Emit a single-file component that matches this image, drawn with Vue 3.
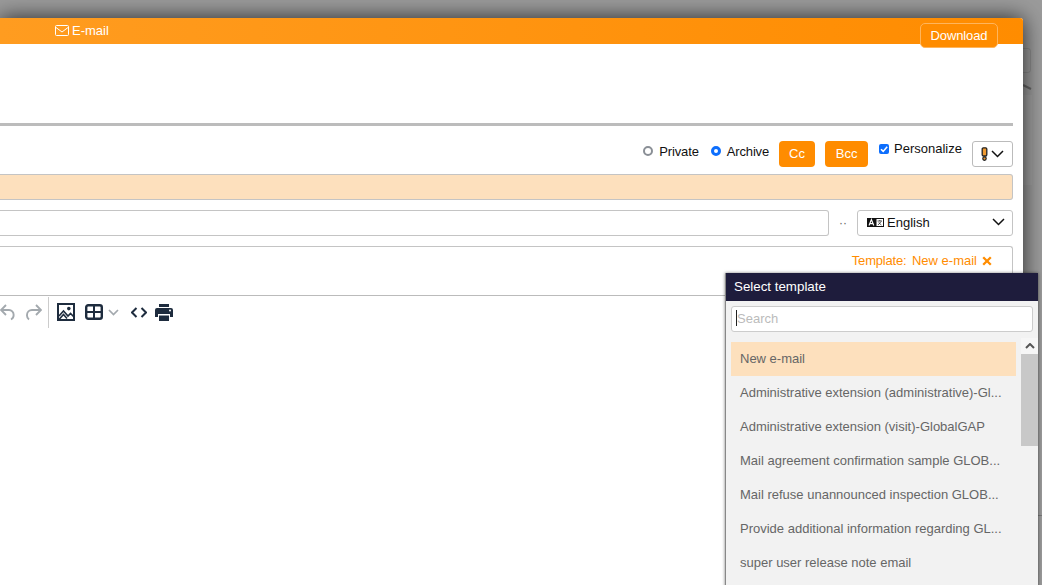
<script setup>
const items = [
  'New e-mail',
  'Administrative extension (administrative)-Gl...',
  'Administrative extension (visit)-GlobalGAP',
  'Mail agreement confirmation sample GLOB...',
  'Mail refuse unannounced inspection GLOB...',
  'Provide additional information regarding GL...',
  'super user release note email'
]
</script>

<template>
  <div class="page">
    <div class="bg-btn"></div>
    <svg class="bg-chev" viewBox="0 0 10 6" width="10" height="6"><path d="M1 1 L9 5" fill="none" stroke="#666" stroke-width="2"/></svg>
    <div class="bg-panel"></div>
    <div class="bg-line"></div>
    <div class="dialog">
      <header class="head">
        <span class="head-title">
          <svg class="env" viewBox="0 0 14 11" width="14" height="11"><rect x=".5" y=".5" width="13" height="10" rx="1" fill="none" stroke="#fff"/><path d="M1 2.5 L7 7 L13 2.5" fill="none" stroke="#fff"/></svg>
          E-mail
        </span>
        <button class="download">Download</button>
      </header>
      <div class="body">
        <div class="rule"></div>
        <div class="opts">
          <label class="radio"><span class="dot off"></span>Private</label>
          <label class="radio"><span class="dot on"></span>Archive</label>
          <button class="pill cc">Cc</button>
          <button class="pill bcc">Bcc</button>
          <label class="pers"><span class="check"><svg viewBox="0 0 10 10" width="10" height="10"><path d="M2 5.2 L4.2 7.4 L8.2 2.8" fill="none" stroke="#fff" stroke-width="1.6"/></svg></span><span class="pers-t">Personalize</span></label>
          <button class="prio">
            <svg viewBox="0 0 7 14" width="7" height="14"><rect x="1.2" y=".8" width="4.6" height="8.2" rx="1.2" fill="#f09a30" stroke="#222" stroke-width="1.3"/><circle cx="3.5" cy="11.6" r="1.7" fill="#f09a30" stroke="#222" stroke-width="1.2"/></svg>
            <svg viewBox="0 0 13 8" width="13" height="8"><path d="M1 1 L6.5 6.5 L12 1" fill="none" stroke="#111" stroke-width="1.5"/></svg>
          </button>
        </div>
        <div class="peach"></div>
        <div class="lang-row">
          <div class="field"></div>
          <span class="dots">··</span>
          <div class="lang">
            <svg viewBox="0 0 17 9" width="17" height="9"><rect width="17" height="9" fill="#111"/><path d="M2 7.5 L4.4 1.5 L6.8 7.5 M3 5.6 H5.8" fill="none" stroke="#fff" stroke-width="1.1"/><rect x="9.5" y="1" width="6.5" height="7" fill="#fff"/><path d="M10.5 3h4.5M12.8 2v1M11 7 14.2 3.5M11.6 4.5l2.8 2.5" stroke="#111" stroke-width=".7" fill="none"/></svg>
            <span>English</span>
            <svg class="lang-chev" viewBox="0 0 13 8" width="13" height="8"><path d="M1 1 L6.5 6.5 L12 1" fill="none" stroke="#111" stroke-width="1.5"/></svg>
          </div>
        </div>
        <div class="subject">
          <span class="tpl"><span class="tpl-k">Template:</span> <span class="tpl-v">New e-mail</span></span>
          <svg class="x" viewBox="0 0 10 10" width="10" height="10"><path d="M1.2 1.2 L8.8 8.8 M8.8 1.2 L1.2 8.8" stroke="#ff8c00" stroke-width="2.3"/></svg>
        </div>
        <div class="toolbar">
          <svg class="undo" viewBox="0 0 15 17" width="15" height="17"><path d="M6 1 L1 6 L6 11 M1 6 H9 A4.6 4.6 0 0 1 13.6 10.6 A5 5 0 0 1 11 15.5" fill="none" stroke="#a3a9ae" stroke-width="1.9"/></svg>
          <svg class="redo" viewBox="0 0 17 17" width="17" height="17"><path d="M11 1 L16 6 L11 11 M16 6 H7 A5 5 0 0 0 2 11 A5 5 0 0 0 4 15.5" fill="none" stroke="#a3a9ae" stroke-width="1.9"/></svg>
          <span class="sep"></span>
          <svg class="img" viewBox="0 0 18 18" width="18" height="18"><rect x="1" y="1" width="16" height="16" fill="none" stroke="#1e2c3e" stroke-width="2"/><circle cx="11.8" cy="5.6" r="1.8" fill="#1e2c3e"/><path d="M2 13 L6.5 8 L11 13 L13.5 10.5 L16.5 13.5 M2 16.5 L6.5 11.5 L10 15.5" fill="none" stroke="#1e2c3e" stroke-width="1.6"/></svg>
          <svg class="tbl" viewBox="0 0 18 16" width="18" height="16"><rect x="1.2" y="1.2" width="15.6" height="13.6" rx="2" fill="none" stroke="#1e2c3e" stroke-width="2.4"/><path d="M1 8 H17 M9 1 V15" stroke="#1e2c3e" stroke-width="2"/></svg>
          <svg class="mini" viewBox="0 0 11 7" width="11" height="7"><path d="M1 1 L5.5 5.5 L10 1" fill="none" stroke="#a3a9ae" stroke-width="1.7"/></svg>
          <svg class="code" viewBox="0 0 16 11" width="16" height="11"><path d="M5.5 1 L1 5.5 L5.5 10 M10.5 1 L15 5.5 L10.5 10" fill="none" stroke="#1e2c3e" stroke-width="2"/></svg>
          <svg class="print" viewBox="0 0 18 17" width="18" height="17"><path d="M4 0 H14 V3 H4 Z" fill="#1e2c3e"/><path d="M2 4 H16 A2 2 0 0 1 18 6 V13 H15 V10 H3 V13 H0 V6 A2 2 0 0 1 2 4 Z" fill="#1e2c3e"/><path d="M4 11.5 H14 V17 H4 Z" fill="#1e2c3e"/><circle cx="15" cy="6.5" r="1" fill="#fff"/></svg>
        </div>
      </div>
    </div>

    <aside class="popup">
      <div class="pop-head">Select template</div>
      <div class="pop-body">
        <div class="search"><span class="caret"></span>Search</div>
        <div class="list-wrap">
          <ul class="list">
            <li v-for="(t, i) in items" :key="t" :class="{ sel: i === 0 }">{{ t }}</li>
          </ul>
          <div class="scroll">
            <div class="up"><svg viewBox="0 0 10 6" width="10" height="6"><path d="M1 5 L5 1 L9 5" fill="none" stroke="#555" stroke-width="2"/></svg></div>
            <div class="thumb"></div>
          </div>
        </div>
      </div>
    </aside>
  </div>
</template>

<style>
html, body { margin: 0; }
</style>

<style scoped>
.page {
  position: relative;
  width: 1042px;
  height: 585px;
  overflow: hidden;
  background: #9b9b9b;
  padding-top: 18px;
  box-sizing: border-box;
  font-family: "Liberation Sans", Arial, sans-serif;
  font-size: 13px;
  color: #111;
}
.bg-btn {
  position: absolute;
  left: 1000px;
  top: 48px;
  width: 31px;
  height: 25px;
  box-sizing: border-box;
  border: 1px solid rgba(0, 0, 0, .1);
  border-radius: 3px;
}
.bg-chev { position: absolute; left: 1022px; top: 84px; }
.bg-panel {
  position: absolute;
  left: 1000px;
  top: 95px;
  width: 32px;
  height: 90px;
  background: rgba(255, 255, 255, .05);
}
.bg-line {
  position: absolute;
  left: 1030px;
  top: 515px;
  width: 12px;
  height: 1px;
  background: rgba(0, 0, 0, .22);
}
.dialog {
  position: relative;
  width: 1023px;
  height: 567px;
  background: #fff;
  border-top-right-radius: 3px;
  box-shadow: 0 0 22px rgba(0, 0, 0, .75);
}
.head {
  height: 26px;
  display: flex;
  justify-content: space-between;
  align-items: flex-start;
  padding: 0 25px 0 55px;
  background: linear-gradient(90deg, #ff9c20, #ff8c00);
  border-top-right-radius: 3px;
  color: #fff;
}
.head-title { display: flex; align-items: center; gap: 3px; height: 25px; }
.download {
  margin-top: 5px;
  width: 78px;
  height: 25px;
  background: #ff8c00;
  color: #fff;
  border: 1px solid #ffb55c;
  border-radius: 5px;
  font: 13px "Liberation Sans", sans-serif;
  letter-spacing: -.1px;
  padding: 0;
}
.body { padding-right: 10px; padding-top: 79px; }
.rule { height: 3px; background: #bcbcbc; }
.opts {
  display: flex;
  justify-content: flex-end;
  align-items: flex-start;
  height: 26px;
  margin-top: 15px;
}
.radio { display: flex; align-items: center; gap: 6px; height: 20px; margin-right: 12px; letter-spacing: -.15px; }
.radio:nth-child(2) { margin-right: 10px; }
.dot { width: 10px; height: 10px; border-radius: 50%; box-sizing: border-box; background: #fff; }
.dot.off { border: 2px solid #8a8f96; }
.dot.on { border: 3px solid #0d6efd; }
.pill {
  height: 26px;
  border: 0;
  border-radius: 4px;
  background: #ff8c00;
  color: #fff;
  font: 13px "Liberation Sans", sans-serif;
  padding: 0 0 2px;
}
.cc { width: 36px; margin-right: 10px; }
.bcc { width: 43px; margin-right: 11px; }
.pers { display: flex; align-items: center; gap: 5px; height: 16px; margin-right: 10px; }
.pers-t { margin-bottom: 2px; }
.check { width: 10px; height: 10px; background: #0d6efd; border-radius: 2px; display: flex; }
.prio {
  width: 41px;
  height: 26px;
  box-sizing: border-box;
  background: #fff;
  border: 1px solid #bbb;
  border-radius: 3px;
  padding: 0 0 0 8px;
  display: flex;
  align-items: center;
  gap: 3px;
}
.peach {
  height: 26px;
  margin-top: 7px;
  box-sizing: border-box;
  background: #fde0bd;
  border: 1px solid #c4c4c4;
  border-left: 0;
  border-radius: 0 3px 3px 0;
}
.lang-row { display: flex; align-items: center; margin-top: 10px; height: 26px; }
.field {
  flex: 1;
  height: 26px;
  box-sizing: border-box;
  border: 1px solid #c4c4c4;
  border-left: 0;
  border-radius: 0 3px 3px 0;
}
.dots { width: 28px; text-align: center; color: #666; font-size: 12px; }
.lang {
  width: 156px;
  height: 26px;
  box-sizing: border-box;
  border: 1px solid #c4c4c4;
  border-radius: 3px;
  display: flex;
  align-items: center;
  gap: 3px;
  padding: 0 7px 2px 9px;
}
.lang-chev { margin-left: auto; }
.subject {
  height: 49px;
  margin-top: 10px;
  box-sizing: border-box;
  border: 1px solid #c4c4c4;
  border-bottom: 0;
  border-left: 0;
  border-radius: 0 3px 0 0;
  display: flex;
  justify-content: flex-end;
  align-items: flex-start;
  padding: 6px 20px 0 0;
  color: #ff8c00;
  gap: 5px;
}
.tpl-k { letter-spacing: -.2px; }
.tpl-v { margin-left: 2px; }
.x { margin-top: 3px; }
.toolbar {
  border-top: 1px solid #bbb;
  margin-right: -10px;
  display: flex;
  align-items: center;
  height: 32px;
}
.toolbar svg { flex: none; }
.undo { margin-top: 1px; }
.redo { margin-left: 10px; margin-top: 1px; }
.sep { width: 1px; height: 31px; background: #ccc; margin-left: 6px; flex: none; }
.img { margin-left: 8px; }
.tbl { margin-left: 10px; }
.mini { margin-left: 5px; }
.code { margin-left: 12px; }
.print { margin-left: 8px; }
.popup {
  position: absolute;
  left: 725px;
  top: 273px;
  width: 312px;
  height: 330px;
  background: #f2f2f2;
  border-left: 1px solid #888;
  box-shadow: 0 0 3px rgba(0, 0, 0, .5);
  color: #666;
}
.pop-head {
  height: 28px;
  line-height: 27px;
  background: #1e1c3c;
  color: #fff;
  padding-left: 8px;
  font-size: 13.33px;
}
.pop-body { padding: 5px 5px 0; }
.search {
  height: 26px;
  box-sizing: border-box;
  border: 1px solid #ccc;
  border-radius: 3px;
  background: #fff;
  color: #bbb;
  padding: 0 0 2px 4px;
  display: flex;
  align-items: center;
}
.caret { width: 1px; height: 16px; background: #222; }
.list-wrap { display: flex; margin-top: 6px; }
.list {
  list-style: none;
  margin: 4px 0 0;
  padding: 0;
  width: 285px;
}
.list li {
  height: 34px;
  line-height: 33px;
  padding: 0 0 0 9px;
  white-space: nowrap;
}
.list li.sel { background: #fde0bd; }
.scroll { width: 17px; margin-left: 5px; margin-right: -5px; }
.up { height: 16px; display: flex; align-items: center; justify-content: center; background: #f6f6f6; }
.thumb { height: 92px; background: #c8c8c8; }
</style>
